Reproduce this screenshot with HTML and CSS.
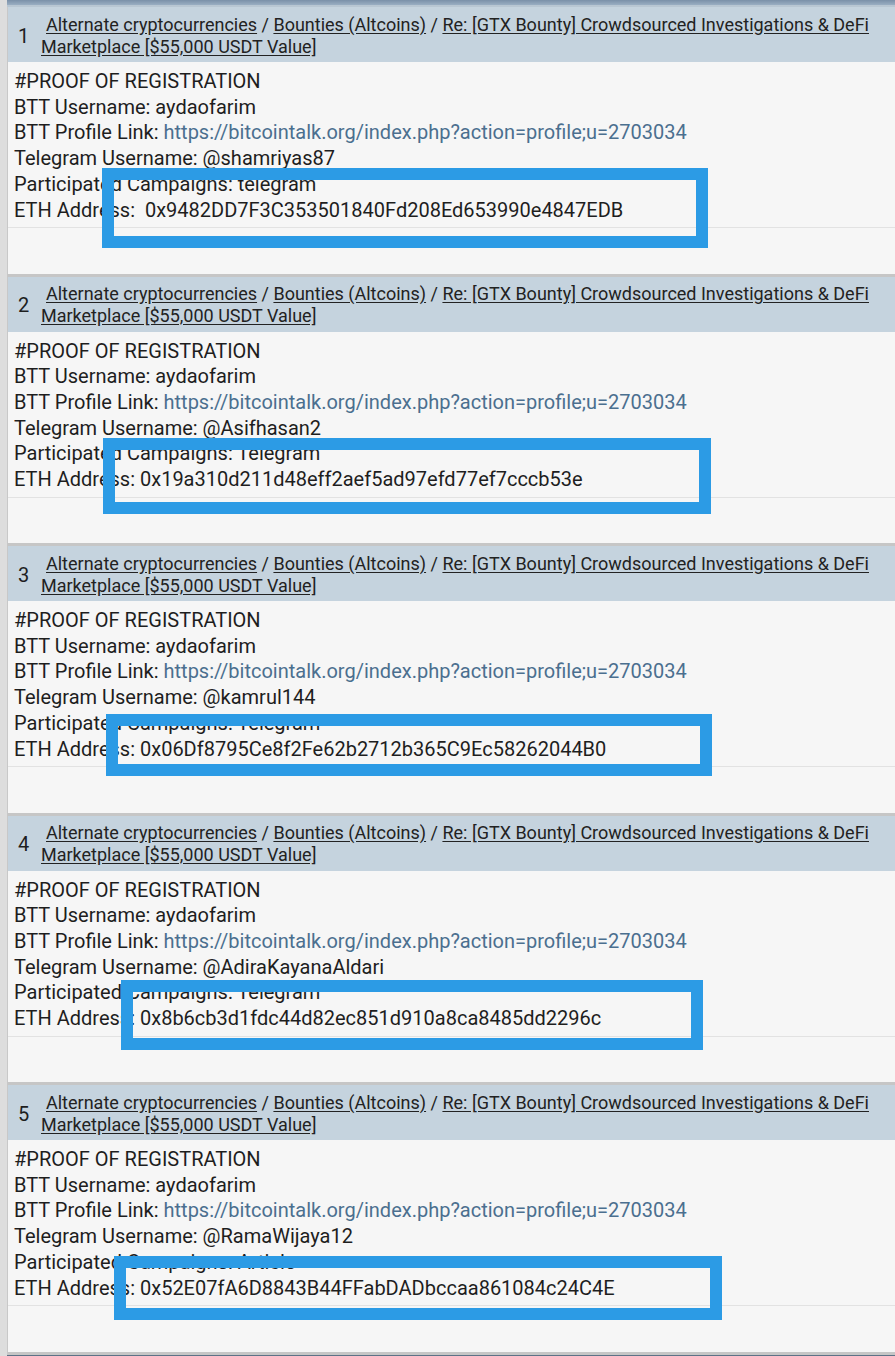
FILE: index.html
```html
<!DOCTYPE html>
<html>
<head>
<meta charset="utf-8">
<link rel="stylesheet" href="styles.css">
</head>
<body>
<div class="page">
  <div class="topbar"></div>

  <div class="post">
    <div class="head">
      <div class="num">1</div>
      <div class="crumbs"><a class="first">Alternate cryptocurrencies</a> / <a>Bounties (Altcoins)</a> / <a>Re: [GTX Bounty] Crowdsourced Investigations &amp; DeFi Marketplace [$55,000 USDT Value]</a></div>
    </div>
    <div class="body">
      <div class="text">
        <div>#PROOF OF REGISTRATION</div>
        <div>BTT Username: aydaofarim</div>
        <div>BTT Profile Link: <a class="link">https://bitcointalk.org/index.php?action=profile;u=2703034</a></div>
        <div>Telegram Username: @shamriyas87</div>
        <div>Participated Campaigns: telegram</div>
        <div>ETH Address:&nbsp; 0x9482DD7F3C353501840Fd208Ed653990e4847EDB</div>
      </div>
      <div class="sig"></div>
    </div>
    <div class="mark" style="left:102px;top:161px;width:606px;height:80px"></div>
  </div>

  <div class="post">
    <div class="head">
      <div class="num">2</div>
      <div class="crumbs"><a class="first">Alternate cryptocurrencies</a> / <a>Bounties (Altcoins)</a> / <a>Re: [GTX Bounty] Crowdsourced Investigations &amp; DeFi Marketplace [$55,000 USDT Value]</a></div>
    </div>
    <div class="body">
      <div class="text">
        <div>#PROOF OF REGISTRATION</div>
        <div>BTT Username: aydaofarim</div>
        <div>BTT Profile Link: <a class="link">https://bitcointalk.org/index.php?action=profile;u=2703034</a></div>
        <div>Telegram Username: @Asifhasan2</div>
        <div>Participated Campaigns: Telegram</div>
        <div>ETH Address: 0x19a310d211d48eff2aef5ad97efd77ef7cccb53e</div>
      </div>
      <div class="sig"></div>
    </div>
    <div class="mark" style="left:103px;top:161px;width:608px;height:76px"></div>
  </div>

  <div class="post">
    <div class="head">
      <div class="num">3</div>
      <div class="crumbs"><a class="first">Alternate cryptocurrencies</a> / <a>Bounties (Altcoins)</a> / <a>Re: [GTX Bounty] Crowdsourced Investigations &amp; DeFi Marketplace [$55,000 USDT Value]</a></div>
    </div>
    <div class="body">
      <div class="text">
        <div>#PROOF OF REGISTRATION</div>
        <div>BTT Username: aydaofarim</div>
        <div>BTT Profile Link: <a class="link">https://bitcointalk.org/index.php?action=profile;u=2703034</a></div>
        <div>Telegram Username: @kamrul144</div>
        <div>Participated Campaigns: Telegram</div>
        <div>ETH Address: 0x06Df8795Ce8f2Fe62b2712b365C9Ec58262044B0</div>
      </div>
      <div class="sig"></div>
    </div>
    <div class="mark" style="left:106px;top:168px;width:606px;height:62px"></div>
  </div>

  <div class="post">
    <div class="head">
      <div class="num">4</div>
      <div class="crumbs"><a class="first">Alternate cryptocurrencies</a> / <a>Bounties (Altcoins)</a> / <a>Re: [GTX Bounty] Crowdsourced Investigations &amp; DeFi Marketplace [$55,000 USDT Value]</a></div>
    </div>
    <div class="body">
      <div class="text">
        <div>#PROOF OF REGISTRATION</div>
        <div>BTT Username: aydaofarim</div>
        <div>BTT Profile Link: <a class="link">https://bitcointalk.org/index.php?action=profile;u=2703034</a></div>
        <div>Telegram Username: @AdiraKayanaAldari</div>
        <div>Participated Campaigns: Telegram</div>
        <div>ETH Address: 0x8b6cb3d1fdc44d82ec851d910a8ca8485dd2296c</div>
      </div>
      <div class="sig"></div>
    </div>
    <div class="mark" style="left:121px;top:164px;width:582px;height:70px"></div>
  </div>

  <div class="post">
    <div class="head">
      <div class="num">5</div>
      <div class="crumbs"><a class="first">Alternate cryptocurrencies</a> / <a>Bounties (Altcoins)</a> / <a>Re: [GTX Bounty] Crowdsourced Investigations &amp; DeFi Marketplace [$55,000 USDT Value]</a></div>
    </div>
    <div class="body">
      <div class="text">
        <div>#PROOF OF REGISTRATION</div>
        <div>BTT Username: aydaofarim</div>
        <div>BTT Profile Link: <a class="link">https://bitcointalk.org/index.php?action=profile;u=2703034</a></div>
        <div>Telegram Username: @RamaWijaya12</div>
        <div>Participated Campaigns: Article</div>
        <div>ETH Address: 0x52E07fA6D8843B44FFabDADbccaa861084c24C4E</div>
      </div>
      <div class="sig"></div>
    </div>
    <div class="mark" style="left:114px;top:171px;width:608px;height:64px"></div>
  </div>

  <div class="bottombar"></div>
</div>
</body>
</html>
```

FILE: styles.css
```css
html, body {
  margin: 0;
  padding: 0;
  background: #f6f6f6;
}

body {
  font-family: Roboto, "Liberation Sans", sans-serif;
  color: #1e1e1e;
}

.page {
  width: 895px;
  height: 1356px;
  overflow: hidden;
  border-left: 7px solid #dddddd;
  box-sizing: border-box;
  background: #f6f6f6;
}

.topbar {
  height: 5px;
  background: linear-gradient(#7a90a8, #9aaec2);
  border-bottom: 2px solid #b8c6d2;
  margin-left: -7px;
}

.post {
  position: relative;
  border-bottom: 3px solid #c6c6c6;
  border-left: 1px solid #c8c8c8;
}

.head {
  display: flex;
  align-items: center;
  background: #c5d3de;
  height: 55px;
  box-sizing: border-box;
  padding: 0 0 0 10px;
}

.num {
  font-size: 20px;
  width: 23px;
  flex: none;
  color: #1e1e1e;
  padding-top: 2px;
}

.crumbs {
  font-size: 18px;
  line-height: 22px;
  color: #222;
  padding-top: 2px;
}

.crumbs a {
  color: #222;
  text-decoration: underline;
  text-underline-offset: 2px;
}

.crumbs a.first {
  margin-left: 5px;
}

.body {
  background: #f6f6f6;
  padding: 7px 0 0 0;
  height: 211.5px;
  box-sizing: border-box;
}

.text {
  font-size: 20px;
  line-height: 25.7px;
  padding-left: 6px;
  color: #1e1e1e;
}

.link {
  color: #4b6f8f;
}

.sig {
  margin-top: 4px;
  border-top: 1px solid #e2e2e2;
}

.mark {
  position: absolute;
  box-sizing: border-box;
  border: 12px solid #2c9be5;
  background: transparent;
  margin-left: -8px;
}

.bottombar {
  height: 3px;
  background: #5d7287;
  margin-left: -7px;
}
```
